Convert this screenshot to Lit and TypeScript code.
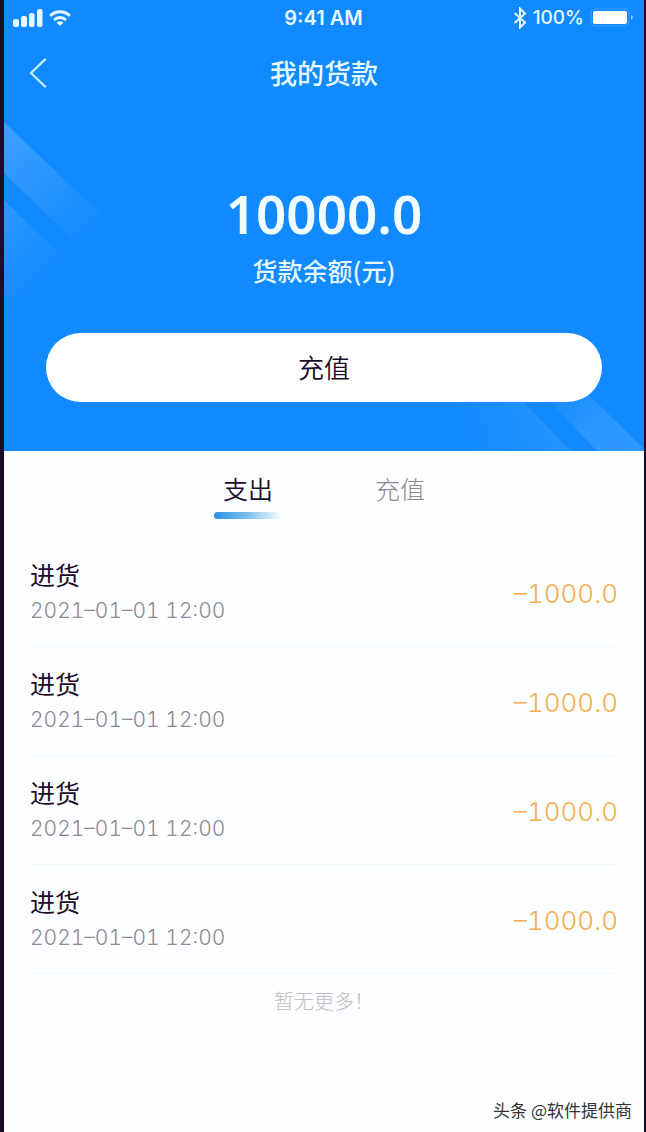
import { LitElement, html, css } from "lit";
import { customElement, state } from "lit/decorators.js";
import { classMap } from "lit/directives/class-map.js";

interface Entry {
  title: string;
  time: string;
  amount: string;
}

@customElement("status-bar")
class StatusBar extends LitElement {
  static styles = css`
    :host {
      display: grid;
      grid-template-columns: 1fr auto 1fr;
      align-items: center;
      height: 36px;
      padding: 0 10px 0 9px;
      color: #e6f8ff;
      font: 500 19px/36px Inter, "Noto Sans", sans-serif;
    }
    .side {
      display: flex;
      align-items: center;
      gap: 6px;
    }
    .right {
      justify-content: flex-end;
    }
    .time {
      font-weight: 600;
      font-size: 20px;
    }
    svg {
      display: block;
      fill: currentColor;
    }
  `;

  render() {
    return html`
      <div class="side">
        <svg width="30" height="18" viewBox="0 0 30 18" aria-hidden="true">
          <rect x="0" y="10" width="6" height="8" rx="2"></rect>
          <rect x="8" y="7" width="6" height="11" rx="2"></rect>
          <rect x="16" y="4" width="5.5" height="14" rx="2"></rect>
          <rect x="24" y="0" width="5.5" height="18" rx="2"></rect>
        </svg>
        <svg width="22" height="16" viewBox="0 0 22 16" aria-hidden="true">
          <g fill="none" stroke="currentColor" stroke-width="3">
            <path d="M1.2 5.8C6.8 .4 15.2 .4 20.8 5.8"></path>
            <path d="M5 10C8.6 6.8 13.4 6.8 17 10"></path>
          </g>
          <path d="M7.6 12.4C9.6 10.8 12.4 10.8 14.4 12.4L11 16Z"></path>
        </svg>
      </div>
      <div class="time">9:41 AM</div>
      <div class="side right">
        <svg width="14" height="22" viewBox="0 0 14 22" aria-hidden="true">
          <path
            d="M1.5 6L12 15.5L7 20.5V1.5L12 6.5L1.5 16"
            fill="none"
            stroke="currentColor"
            stroke-width="2"
          ></path>
        </svg>
        <span>100%</span>
        <svg width="44" height="20" viewBox="0 0 44 20" aria-hidden="true">
          <rect x="1" y="1" width="38" height="17" rx="4" fill="none" stroke="#3b9fff"></rect>
          <rect x="3" y="3" width="34" height="13" rx="2" fill="#fff"></rect>
          <path d="M41 7C43.4 8 43.4 11 41 12Z" fill="#8fcbff"></path>
        </svg>
      </div>
    `;
  }
}

@customElement("balance-panel")
class BalancePanel extends LitElement {
  static styles = css`
    :host {
      display: block;
      position: relative;
      background: #128aff;
      color: #e6f8ff;
      padding-bottom: 49px;
    }
    .beams {
      position: absolute;
      inset: 0;
      overflow: hidden;
    }
    .beams svg {
      position: absolute;
    }
    .top {
      left: 0;
      top: 122px;
    }
    .bottom {
      right: 0;
      bottom: 0;
    }
    .content {
      position: relative;
    }
    .nav {
      display: grid;
      grid-template-columns: 48px 1fr 48px;
      align-items: center;
      height: 74px;
      padding: 0 10px;
    }
    .back {
      display: grid;
      place-items: center;
      width: 48px;
      height: 48px;
      padding: 0;
      border: 0;
      background: none;
      color: inherit;
    }
    h1 {
      margin: 0;
      text-align: center;
      font-size: 27px;
      font-weight: 500;
      line-height: 40px;
    }
    .amount {
      margin-top: 68px;
      text-align: center;
      color: #f0fcff;
      font: 600 53px/72px "Noto Sans", sans-serif;
    }
    .label {
      text-align: center;
      font-size: 25px;
      font-weight: 500;
      line-height: 40px;
    }
    .recharge {
      display: block;
      width: calc(100% - 84px);
      height: 69px;
      margin: 43px auto 0;
      padding: 0 0 2px;
      border: 0;
      border-radius: 35px;
      background: #fff;
      color: #1c0c28;
      font: inherit;
      font-size: 26px;
      font-weight: 350;
      line-height: 67px;
    }
  `;

  render() {
    return html`
      <div class="beams" aria-hidden="true">
        <svg class="top" width="140" height="220" viewBox="0 0 140 220">
          <defs>
            <linearGradient id="a" gradientUnits="userSpaceOnUse" x1="0" y1="20" x2="92" y2="112">
              <stop offset="0" stop-color="#fff" stop-opacity=".17"></stop>
              <stop offset="1" stop-color="#fff" stop-opacity="0"></stop>
            </linearGradient>
            <linearGradient id="b" gradientUnits="userSpaceOnUse" x1="0" y1="100" x2="52" y2="152">
              <stop offset="0" stop-color="#fff" stop-opacity=".1"></stop>
              <stop offset="1" stop-color="#fff" stop-opacity="0"></stop>
            </linearGradient>
          </defs>
          <path d="M0 0L130 124V176L0 51Z" fill="url(#a)"></path>
          <path d="M0 78L130 204V220H0Z" fill="url(#b)"></path>
        </svg>
        <svg class="bottom" width="220" height="100" viewBox="0 0 220 100">
          <defs>
            <linearGradient id="c" gradientUnits="userSpaceOnUse" x1="130" y1="20" x2="204" y2="98">
              <stop offset="0" stop-color="#fff" stop-opacity="0"></stop>
              <stop offset=".6" stop-color="#fff" stop-opacity=".1"></stop>
              <stop offset="1" stop-color="#fff" stop-opacity=".12"></stop>
            </linearGradient>
            <linearGradient id="d" gradientUnits="userSpaceOnUse" x1="40" y1="100" x2="120" y2="70">
              <stop offset="0" stop-color="#fff" stop-opacity="0"></stop>
              <stop offset="1" stop-color="#fff" stop-opacity=".07"></stop>
            </linearGradient>
          </defs>
          <path d="M120 0L220 98V100H173L77 0Z" fill="url(#c)"></path>
          <path d="M0 0H50L147 100H46Z" fill="url(#d)"></path>
        </svg>
      </div>
      <div class="content">
        <status-bar></status-bar>
        <header class="nav">
          <button class="back" aria-label="返回">
            <svg width="18" height="30" viewBox="0 0 18 30">
              <path
                d="M16 1.5L2 15L16 28.5"
                fill="none"
                stroke="#c4efff"
                stroke-width="2.4"
                stroke-linecap="round"
                stroke-linejoin="round"
              ></path>
            </svg>
          </button>
          <h1>我的货款</h1>
        </header>
        <div class="amount">10000.0</div>
        <div class="label">货款余额(元)</div>
        <button class="recharge">充值</button>
      </div>
    `;
  }
}

@customElement("record-list")
class RecordList extends LitElement {
  static properties = { entries: { attribute: false } };
  declare entries: Entry[];

  static styles = css`
    ul {
      list-style: none;
      margin: 0;
      padding: 0 24px;
    }
    li {
      display: flex;
      align-items: center;
      justify-content: space-between;
      height: 108px;
      padding: 0 2px;
      border-bottom: 1px solid #f5f8fb;
    }
    .title {
      color: #1c0c28;
      font-size: 25px;
      line-height: 38px;
    }
    .time,
    .amount {
      font-family: Inter, "Noto Sans", sans-serif;
      font-weight: 300;
      font-variant-numeric: tabular-nums;
    }
    .time {
      color: #8d8994;
      font-size: 21px;
      line-height: 36px;
    }
    .amount {
      padding-top: 4px;
      color: #f5ae51;
      font-size: 26px;
      line-height: 40px;
    }
  `;

  render() {
    return html`
      <ul>
        ${this.entries.map(
          (e) => html`
            <li>
              <div>
                <div class="title">${e.title}</div>
                <div class="time">${e.time}</div>
              </div>
              <div class="amount">${e.amount}</div>
            </li>
          `
        )}
      </ul>
    `;
  }
}

@customElement("app-root")
class AppRoot extends LitElement {
  @state() private tab = "支出";

  private entries: Entry[] = Array.from({ length: 4 }, () => ({
    title: "进货",
    time: "2021–01–01 12:00",
    amount: "–1000.0",
  }));

  static styles = css`
    :host {
      display: flex;
      flex-direction: column;
      box-sizing: border-box;
      min-height: 100vh;
      border: solid #1b0c2c;
      border-width: 0 2px 0 4px;
      background: #fcfeff;
      font-family: "Noto Sans CJK SC", sans-serif;
    }
    .tabs {
      display: flex;
      justify-content: center;
      gap: 84px;
      padding: 17px 0 19px;
    }
    .tab {
      display: flex;
      flex-direction: column;
      align-items: center;
      width: 68px;
      padding: 0;
      border: 0;
      background: none;
      color: #8d8994;
      font: inherit;
      font-size: 25px;
      font-weight: 300;
      line-height: 40px;
    }
    .tab::after {
      content: "";
      width: 100%;
      height: 7px;
      margin-top: 4px;
      border-radius: 4px;
    }
    .active {
      color: #1c0c28;
      font-weight: 350;
    }
    .active::after {
      background: linear-gradient(90deg, #2a93e2, #7fc0f2 50%, #fcfeff);
    }
    .more {
      margin: 0;
      padding-top: 12px;
      text-align: center;
      color: #bdbdc4;
      font-size: 20px;
      font-weight: 300;
      line-height: 30px;
    }
    .credit {
      margin: auto 12px 8px auto;
      color: #333338;
      font-size: 17px;
      line-height: 28px;
    }
  `;

  render() {
    return html`
      <balance-panel></balance-panel>
      <nav class="tabs">
        ${["支出", "充值"].map(
          (name) => html`
            <button
              class=${classMap({ tab: true, active: this.tab === name })}
              @click=${() => (this.tab = name)}
            >
              ${name}
            </button>
          `
        )}
      </nav>
      <record-list .entries=${this.entries}></record-list>
      <p class="more">暂无更多！</p>
      <div class="credit">头条 @软件提供商</div>
    `;
  }
}
